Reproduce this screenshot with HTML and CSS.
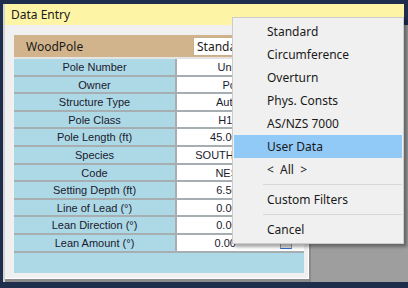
FILE: index.html
```html
<!DOCTYPE html>
<html lang="en">

<head>
  <meta charset="UTF-8">
  <meta name="viewport" content="width=device-width, initial-scale=1.0">
  <title>Data Entry</title>
  <link rel="stylesheet" href="styles.css">
</head>

<body>
  <div class="screen">
    <div class="window">
      <div class="title-bar">Data Entry</div>
      <div class="window-body">
        <div class="dialog">
          <div class="grid">
            <div class="grid-header">
              <span class="grid-title">WoodPole</span>
              <div class="combo">Standard</div>
            </div>
            <div class="row"><div class="label">Pole Number</div><div class="value">Unknown</div></div>
            <div class="row"><div class="label">Owner</div><div class="value">PoleCo</div></div>
            <div class="row"><div class="label">Structure Type</div><div class="value">Automatic</div></div>
            <div class="row"><div class="label">Pole Class</div><div class="value">H1 Class</div></div>
            <div class="row"><div class="label">Pole Length (ft)</div><div class="value num">45.00000</div></div>
            <div class="row"><div class="label">Species</div><div class="value">SOUTHERN PINE</div></div>
            <div class="row"><div class="label">Code</div><div class="value">NESC Std</div></div>
            <div class="row"><div class="label">Setting Depth (ft)</div><div class="value num">6.50000</div></div>
            <div class="row"><div class="label">Line of Lead (&deg;)</div><div class="value num">0.00000</div></div>
            <div class="row"><div class="label">Lean Direction (&deg;)</div><div class="value num">0.00000</div></div>
            <div class="row"><div class="label">Lean Amount (&deg;)</div><div class="value num editing">0.00<span class="spin"></span></div></div>
            <div class="grid-fill"></div>
          </div>
        </div>
        <div class="backdrop"></div>
      </div>
    </div>

    <!-- context menu for the WoodPole combo -->
    <ul class="menu">
      <li>Standard</li>
      <li>Circumference</li>
      <li>Overturn</li>
      <li>Phys. Consts</li>
      <li>AS/NZS 7000</li>
      <li class="active">User Data</li>
      <li>&lt;&nbsp; All &nbsp;&gt;</li>
      <li class="separator"></li>
      <li>Custom Filters</li>
      <li class="separator"></li>
      <li>Cancel</li>
    </ul>
  </div>
</body>

</html>
```

FILE: styles.css
```css
body {
  margin: 0;
  padding: 0;
  background-color: #1f2e4d;
  font-family: "Liberation Sans", Arial, sans-serif;
}

.screen {
  position: relative;
  width: 408px;
  height: 288px;
  padding: 4px 0 6px 3px;
  box-sizing: border-box;
  display: flex;
}

.window {
  flex-grow: 1;
  display: flex;
  flex-direction: column;
  border-left: 2px solid #d4d4d4;
}

.title-bar {
  height: 21px;
  line-height: 22px;
  padding-left: 6px;
  margin-right: 4px;
  background-color: #fdf4a6;
  font-family: "Noto Sans", sans-serif;
  font-size: 12px;
  color: #1a1a1a;
}

.window-body {
  flex-grow: 1;
  display: flex;
  background-color: #9e9e9e;
}

.dialog {
  width: 290px;
  background-color: #f0f0f0;
  padding: 10px 5px 5px 9px;
  border-right: 2px solid #8a8a8a;
  border-bottom: 3px solid #8a8a8a;
  box-shadow: inset -1px -1px 0 #ffffff;
}

.grid {
  width: 290px;
  height: 238px;
  background-color: #add8e6;
  display: flex;
  flex-direction: column;
}

.grid-header {
  height: 22px;
  background-color: #d2b48c;
  border-bottom: 2px solid #e4e4e4;
  display: flex;
  align-items: center;
  font-family: "Noto Sans", sans-serif;
  font-size: 12px;
  color: #1a1a1a;
}

.grid-title {
  padding-left: 12px;
  width: 167px;
}

.combo {
  width: 100px;
  height: 17px;
  line-height: 17px;
  padding-left: 3px;
  background-color: #ffffff;
  border: 1px solid #c8b08a;
  overflow: hidden;
}

.row {
  height: 15.6px;
  display: flex;
  border-bottom: 2px solid #a6aeb2;
  font-size: 11px;
  line-height: 16px;
  color: #1a1a2e;
}

.label {
  width: 161px;
  text-align: center;
  border-right: 2px solid #a6aeb2;
}

.value {
  flex-grow: 1;
  position: relative;
  background-color: #ffffff;
  text-align: center;
  white-space: nowrap;
  overflow: hidden;
}

.value.num {
  text-align: right;
  padding-right: 48px;
}

.value.editing {
  padding-right: 68px;
}

.spin {
  position: absolute;
  right: 12px;
  top: 1px;
  width: 12px;
  height: 13px;
  background-color: #e6e6e6;
  border: 1px solid #9a9a9a;
  border-bottom-color: #2d6bd1;
  box-sizing: border-box;
}

.grid-fill {
  flex-grow: 1;
}

.backdrop {
  flex-grow: 1;
}

.menu {
  position: absolute;
  left: 232px;
  top: 17px;
  width: 172px;
  margin: 0;
  padding: 2px 1px;
  box-sizing: border-box;
  list-style-type: none;
  background-color: #f0f0f0;
  border: 1px solid #cccccc;
  box-shadow: 3px 3px 3px rgba(0, 0, 0, 0.35);
  font-family: "Noto Sans", sans-serif;
  font-size: 12px;
  color: #1a1a1a;
}

.menu li {
  height: 23px;
  line-height: 23px;
  padding-left: 33px;
}

.menu li.active {
  background-color: #91c9f7;
}

.menu li.separator {
  height: 1px;
  margin: 3px 0 3px 29px;
  padding: 0;
  background-color: #d7d7d7;
}
```
